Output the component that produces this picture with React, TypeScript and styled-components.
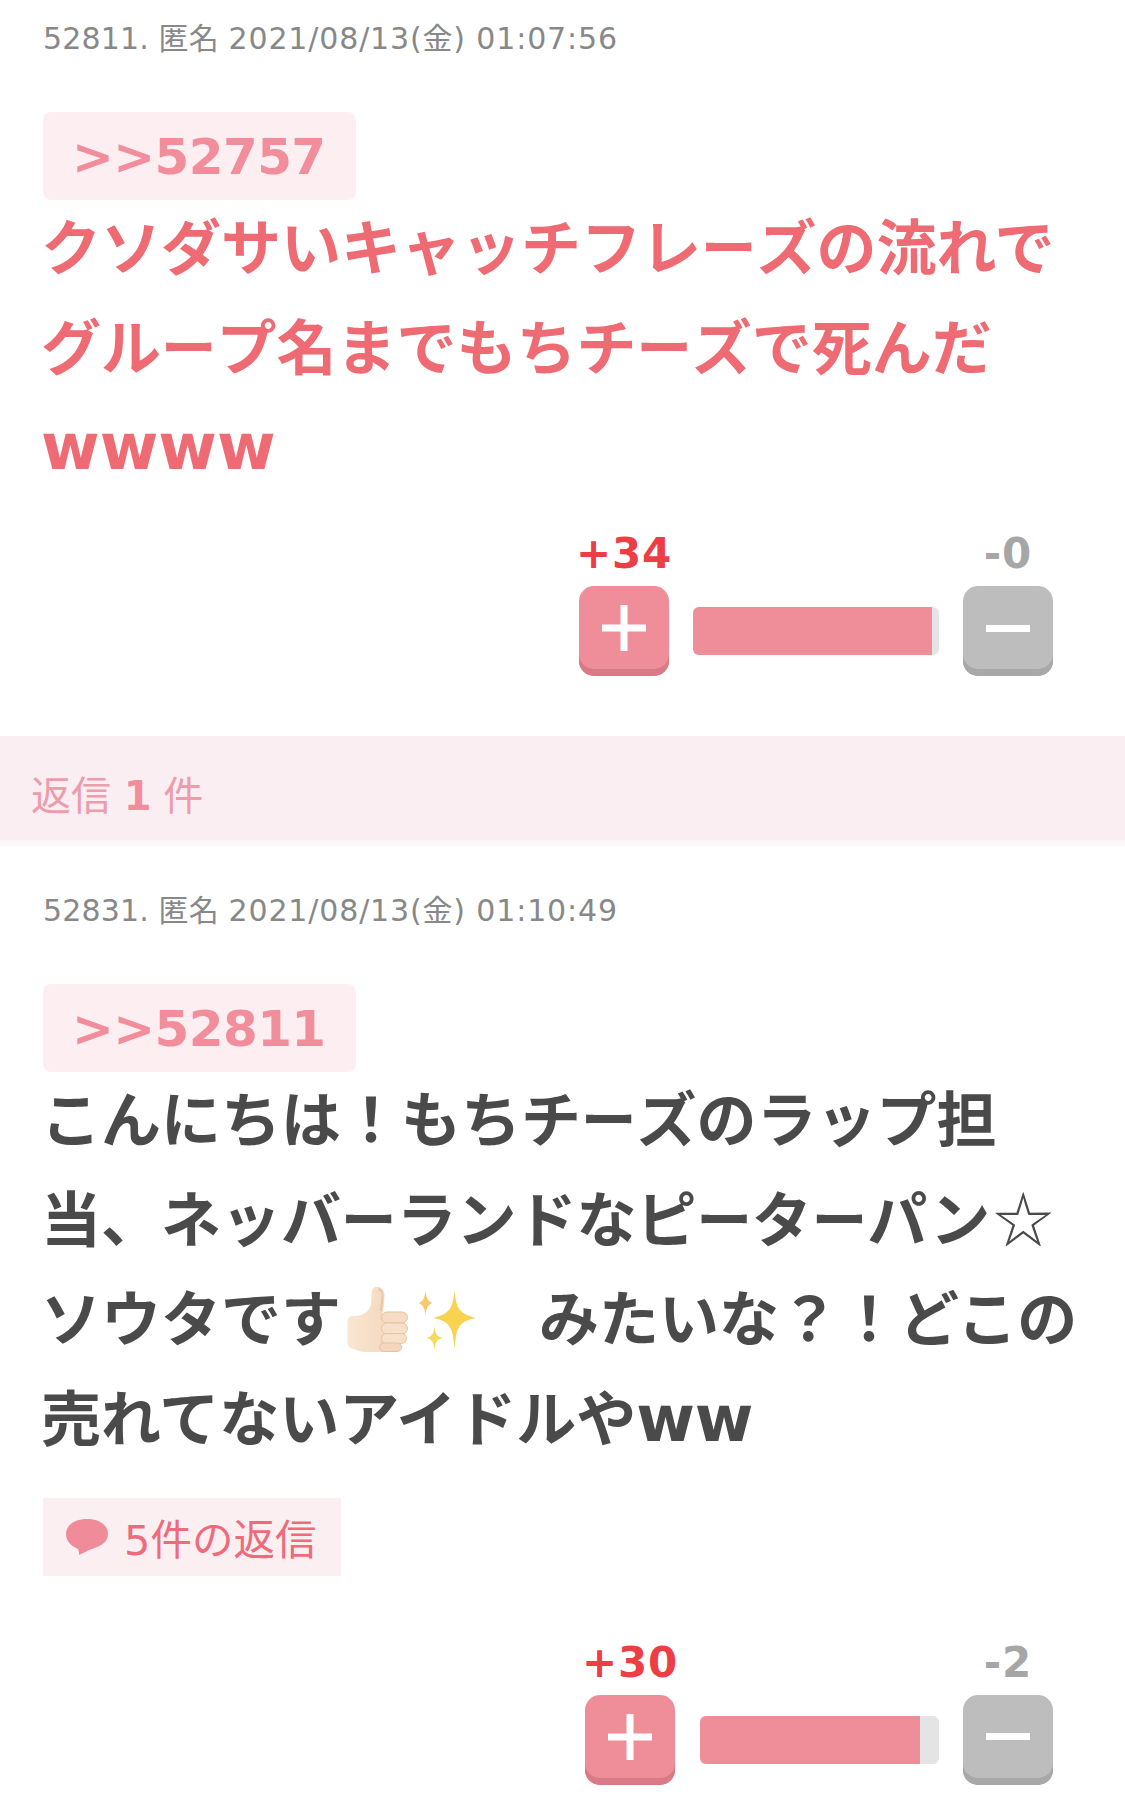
import React from "react";
import styled, { createGlobalStyle } from "styled-components";

const Global = createGlobalStyle`
  html, body { margin: 0; padding: 0; background: #fff; }
  body { font-family: "DejaVu Sans", "Noto Sans CJK JP", sans-serif; }
`;

const Page = styled.div`
  width: 1125px;
  height: 1800px;
  overflow: hidden;
`;

const Post = styled.article<{ $top: number }>`
  padding: ${(p) => p.$top}px 43px 60px;
`;

const Meta = styled.div`
  font-size: 30px;
  line-height: 40px;
  height: 40px;
  letter-spacing: 0.15px;
  color: #888888;
`;

const MetaDate = styled.span`
  letter-spacing: 0.85px;
`;

const Anchor = styled.div`
  width: 313px;
  height: 88px;
  margin-top: 53px;
  box-sizing: border-box;
  padding-left: 29px;
  border-radius: 8px;
  background: #fdeff1;
  color: #f28e9b;
  font-size: 50px;
  font-weight: 700;
  letter-spacing: -0.6px;
  line-height: 90px;
`;

const Body = styled.p<{ $pink?: boolean }>`
  margin: 0 0 0 -2px;
  font-size: 60px;
  font-weight: 700;
  line-height: 99.6px;
  color: ${(p) => (p.$pink ? "#ee6b73" : "#4a4a4a")};
`;

const Latin = styled.span`
  font-size: 63.5px;
  line-height: 0;
`;

const Chouon = styled.span`
  font-size: 55.4px;
  line-height: 0;
  vertical-align: 2px;
`;

const Star = styled.span`
  font-family: "Noto Sans CJK JP", sans-serif;
  font-weight: 400;
  line-height: 0;
  margin-left: 3px;
`;

const Emoji = styled.svg`
  display: inline-block;
  width: 69px;
  height: 68px;
  vertical-align: -12px;
`;

const ReplyBadge = styled.div`
  display: flex;
  align-items: center;
  gap: 16px;
  width: 298px;
  height: 78px;
  margin-top: 27.4px;
  box-sizing: border-box;
  padding-left: 23px;
  background: #fbeff2;
  color: #ee6b7c;
  font-size: 41.5px;
`;

const Votes = styled.div<{ $top: number }>`
  display: flex;
  justify-content: flex-end;
  align-items: flex-end;
  margin-top: ${(p) => p.$top}px;
  padding-right: 29px;
`;

const VoteColumn = styled.div`
  display: flex;
  flex-direction: column;
  align-items: center;
  width: 90px;
`;

const Count = styled.div<{ $plus?: boolean }>`
  font-size: 42px;
  font-weight: 700;
  letter-spacing: 0.8px;
  line-height: 50px;
  margin-bottom: 7px;
  white-space: nowrap;
  color: ${(p) => (p.$plus ? "#ee3e45" : "#a6a6a6")};
`;

const VoteButton = styled.div<{ $plus?: boolean }>`
  display: flex;
  align-items: center;
  justify-content: center;
  width: 90px;
  height: 90px;
  box-sizing: border-box;
  padding-bottom: 6px;
  border-radius: 15px;
  background: ${(p) => (p.$plus ? "#ef8e99" : "#bdbdbd")};
  box-shadow: inset 0 -7px 0 ${(p) => (p.$plus ? "#d97b86" : "#a8a8a8")};
`;

const Ratio = styled.div<{ $width: number; $left: number; $right: number }>`
  width: ${(p) => p.$width}px;
  height: 48px;
  flex-shrink: 0;
  margin: 0 ${(p) => p.$right}px 21px ${(p) => p.$left}px;
  border-radius: 6px;
  overflow: hidden;
  background: #e4e4e4;
`;

const RatioFill = styled.div`
  height: 100%;
  background: #ef8e99;
`;

const ReplyBand = styled.div`
  height: 110px;
  box-sizing: border-box;
  padding-left: 31px;
  background: #fbeef3;
  border-bottom: 6px solid #fdf6f9;
  color: #eb9dac;
  font-size: 40px;
  line-height: 120px;
  b { font-weight: 700; color: #f28e9b; margin-right: -1px; }
`;

const PlusIcon = () => (
  <svg width="44" height="46" viewBox="0 0 44 46" fill="#fff">
    <rect x="18.5" y="0" width="7" height="46" />
    <rect x="0" y="19.5" width="44" height="7" />
  </svg>
);

const MinusIcon = () => (
  <svg width="44" height="7" viewBox="0 0 44 7" fill="#fff">
    <rect width="44" height="7" />
  </svg>
);

const Thumb = () => (
  <Emoji viewBox="0 0 68 68" aria-label="thumbs up">
    <defs>
      <linearGradient id="palm" x1="0" y1="0" x2="1" y2="0">
        <stop offset="0" stopColor="#fae6d2" />
        <stop offset="1" stopColor="#f4d9bf" />
      </linearGradient>
    </defs>
    <path
      d="M6 36c0-3 2-5 6-5 5 0 10-1 14-5 4-4 4-10 4-17 0-5 3-8 7-7 4 1 6 4 6 9 0 6-1 12-2 18h3v38H24c-5 0-8-2-12-3-4-1-6-3-6-7z"
      fill="url(#palm)"
    />
    <path d="M37 4c2 0 4 3 4 7 0 5-1 10-2 15" stroke="#e9c6a6" strokeWidth="2" fill="none" />
    <rect x="40" y="27" width="26" height="11" rx="5.5" fill="#f6dcc3" stroke="#e6c3a3" strokeWidth="1" />
    <rect x="40" y="38" width="26" height="11" rx="5.5" fill="#f7e0c9" stroke="#e6c3a3" strokeWidth="1" />
    <rect x="40" y="48.5" width="25" height="10" rx="5" fill="#f7e0c9" stroke="#e6c3a3" strokeWidth="1" />
    <rect x="38" y="58" width="22" height="8.5" rx="4.2" fill="#f4d6ba" stroke="#e6c3a3" strokeWidth="1" />
  </Emoji>
);

const Sparkles = () => (
  <Emoji viewBox="0 0 68 68" aria-label="sparkles">
    <path d="M44 6c2 16 3 22 21 27-18 4-19 10-21 31-2-21-3-27-21-31 18-5 19-11 21-27z" fill="#f9d24f" />
    <path d="M15 6c1 7 2 10 7 12-5 2-6 5-7 12-1-7-2-10-7-12 5-2 6-5 7-12z" fill="#f7c96a" />
    <path d="M24 41c1 8 2 10 8 12-6 2-7 4-8 12-1-8-2-10-8-12 6-2 7-4 8-12z" fill="#f2dc5e" />
  </Emoji>
);

const BubbleIcon = () => (
  <svg width="42" height="36" viewBox="0 0 42 36" fill="#f08c9a">
    <path d="M21 0c12 0 21 6 21 15 0 8-7 12-16 15-4 1-8 4-13 6 0-2 0-4-1-6C5 27 0 22 0 15 0 6 9 0 21 0z" />
  </svg>
);

const withChouon = (text: string) =>
  text.split(/(ー)/).map((part, i) => (part === "ー" ? <Chouon key={i}>ー</Chouon> : part));

type VoteProps = {
  plus: string;
  minus: string;
  width: number;
  pct: number;
  left: number;
  top: number;
};

const VoteBar = ({ plus, minus, width, pct, left, top }: VoteProps) => (
  <Votes $top={top}>
    <VoteColumn>
      <Count $plus>{plus}</Count>
      <VoteButton $plus>
        <PlusIcon />
      </VoteButton>
    </VoteColumn>
    <Ratio $width={width} $left={left} $right={24}>
      <RatioFill style={{ width: `${pct}%` }} />
    </Ratio>
    <VoteColumn>
      <Count>{minus}</Count>
      <VoteButton>
        <MinusIcon />
      </VoteButton>
    </VoteColumn>
  </Votes>
);

export default function App() {
  return (
    <Page>
      <Global />
      <Post $top={19}>
        <Meta>
          52811. 匿名 <MetaDate>2021/08/13(金) 01:07:56</MetaDate>
        </Meta>
        <Anchor>&gt;&gt;52757</Anchor>
        <Body $pink>
          {withChouon("クソダサいキャッチフレーズの流れでグループ名までもちチーズで死んだ ")}
          <Latin>wwww</Latin>
        </Body>
        <VoteBar plus="+34" minus="-0" width={246} pct={97} left={24} top={30.4} />
      </Post>
      <ReplyBand>
        返信 <b>1</b> 件
      </ReplyBand>
      <Post $top={45}>
        <Meta>
          52831. 匿名 <MetaDate>2021/08/13(金) 01:10:49</MetaDate>
        </Meta>
        <Anchor>&gt;&gt;52811</Anchor>
        <Body>
          {withChouon("こんにちは！もちチーズのラップ担当、ネッバーランドなピーターパン")}
          <Star>☆</Star>
          ソウタです
          <Thumb />
          <Sparkles />
          {"\u3000"}みたいな？！どこの売れてないアイドルや<Latin>ww</Latin>
        </Body>
        <ReplyBadge>
          <BubbleIcon />
          <span>5件の返信</span>
        </ReplyBadge>
        <VoteBar plus="+30" minus="-2" width={239} pct={92} left={25} top={62} />
      </Post>
    </Page>
  );
}
